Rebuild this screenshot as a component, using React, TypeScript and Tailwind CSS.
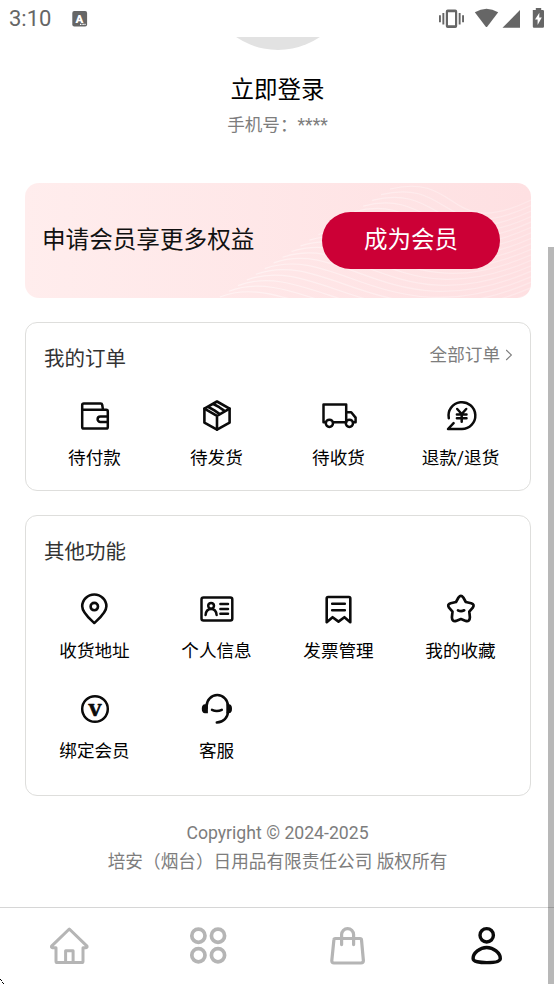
import React from "react";

const INK = "#0b0b0b";
const MUTED = "#b5b5b5";

function Glyph({ children, w = 2.5 }: { children: React.ReactNode; w?: number }) {
  return (
    <svg width="40" height="40" viewBox="0 0 40 40" fill="none" stroke={INK} strokeWidth={w} strokeLinecap="round" strokeLinejoin="round">
      {children}
    </svg>
  );
}

const Wallet = () => (
  <Glyph w={2.5}>
    <path d="M7.2 14V9Q7.2 7.4 8.8 7.4H25.6Q27 7.4 27.2 8.8L28 13.8" />
    <path d="M7.2 13.8H31.2Q32.8 13.8 32.8 15.4V31Q32.8 32.6 31.2 32.6H8.8Q7.2 32.6 7.2 31Z" />
    <path d="M32.4 20.4H25.4a2.8 2.8 0 0 0 0 5.6H32.4" />
  </Glyph>
);
const Box = () => (
  <Glyph w={2.6}>
    <path d="M20 5.5L32.6 12.6V26.6L20 33.7L7.4 26.6V12.6Z" />
    <path d="M7.4 12.6L20 19.8L32.6 12.6M20 19.8V33.5M16.4 8L22.2 11.2L26.8 14.4M11.4 11L17.4 14.4L22.4 17.8" />
  </Glyph>
);
const Truck = () => (
  <Glyph w={2.5}>
    <path d="M6.5 26.2H4.5V8.4H27.2V26.2H14.5" />
    <path d="M27.2 16.2H32.2L36.6 21.6V26.2H34.6" />
    <circle cx="10.4" cy="27.3" r="3.6" />
    <circle cx="30.4" cy="27.3" r="3.6" />
  </Glyph>
);
const Refund = () => (
  <Glyph w={2.5}>
    <path d="M7.8 22.3A13.4 13.4 0 1 1 20.7 33H7L12.6 27.2" />
    <path d="M16.2 13L20.7 18L25.2 13M15.9 18.4H25.5M15.9 22.2H25.5M20.7 18V25.8" />
  </Glyph>
);
const Pin = () => (
  <Glyph w={2.6}>
    <path d="M19.3 34C15 30 7.2 24 7.2 17.3A12.1 11.8 0 0 1 31.4 17.3C31.4 24 23.6 30 19.3 34Z" />
    <circle cx="19.3" cy="17.6" r="3.7" />
  </Glyph>
);
const IdCard = () => (
  <Glyph w={2.5}>
    <rect x="4.5" y="8.5" width="30.8" height="23" rx="2" />
    <circle cx="14.1" cy="16.8" r="2.9" />
    <path d="M8.6 26C8.9 22.2 11 20 14.1 20S19.3 22.2 19.6 26M23.4 15.1H31M23.4 20H31M23.4 24.8H31" />
  </Glyph>
);
const Invoice = () => (
  <Glyph w={2.6}>
    <path d="M7.7 33.2V9.4Q7.7 8 9.1 8H29.9Q31.3 8 31.3 9.4V33.2L25.4 28.2L19.5 32.6L13.6 28.2Z" />
    <path d="M13.2 14.8H25.8M13.2 21.2H25.8" />
  </Glyph>
);
const Star = () => (
  <Glyph w={2.7}>
    <path d="M17.5 8.5Q19.9 5.3 22.3 8.5L24.8 13L30.2 14.2Q34 15.5 31.8 18.7L28.3 22.7L28.9 28.3Q28.8 32.8 24.8 31.9L19.9 30L15 31.9Q11 32.8 10.9 28.3L11.5 22.7L8 18.7Q5.8 15.5 9.6 14.2L15 13Z" />
    <path d="M17 21.3Q20 23 23.2 21.3" />
  </Glyph>
);
const VipBadge = () => (
  <Glyph>
    <circle cx="20" cy="20" r="12.8" />
    <text x="20" y="26.6" textAnchor="middle" fontSize="16.5" fontWeight="700" fill={INK} stroke={INK} strokeWidth="0.7" fontFamily="DejaVu Serif, serif">V</text>
  </Glyph>
);
const Service = () => (
  <Glyph w={2.5}>
    <path d="M9.6 19V17A10.7 10.9 0 0 1 31 17V22C31 28.6 26.5 33.2 19.8 33.4" />
    <path d="M15 20.8Q19.8 23.2 24.8 20.8" />
    <path d="M10.9 15.2V24.2H8Q4.8 24 4.8 19.7T8 15.2ZM29.4 15.2V24.2H31.9Q35 24 35 19.7T31.9 15.2Z" fill={INK} stroke="none" />
  </Glyph>
);

const orders = [
  { label: "待付款", Icon: Wallet },
  { label: "待发货", Icon: Box },
  { label: "待收货", Icon: Truck },
  { label: "退款/退货", Icon: Refund },
];
const features = [
  { label: "收货地址", Icon: Pin },
  { label: "个人信息", Icon: IdCard },
  { label: "发票管理", Icon: Invoice },
  { label: "我的收藏", Icon: Star },
  { label: "绑定会员", Icon: VipBadge },
  { label: "客服", Icon: Service },
];

function Menu({ items }: { items: typeof orders }) {
  return (
    <div className="grid grid-cols-[repeat(4,122px)] px-2">
      {items.map(({ label, Icon }) => (
        <div key={label} className="flex h-[100px] flex-col items-center">
          <Icon />
          <span className="mt-[9px] pr-px text-[17.6px] leading-[26px] text-black">{label}</span>
        </div>
      ))}
    </div>
  );
}

function StatusBar() {
  return (
    <header className="flex h-[37px] items-center justify-between pl-[9px]">
      <div className="flex items-center">
        <span className="w-[63px] pt-px font-['Roboto'] text-[22px] leading-[36px] text-[#666]">3:10</span>
        <svg width="16" height="18" viewBox="0 0 16 18">
          <rect x="0.3" y="1" width="14.8" height="15.6" rx="2" fill="#666" />
          <text x="7.3" y="12.8" textAnchor="middle" fontSize="11.5" fontWeight="900" fontFamily="Roboto, sans-serif" fill="#fff">A</text>
          <path d="M8 14.4h1.4M10.4 14.4h1.4M12.4 14.4h1.2" stroke="#fff" strokeWidth="1.2" />
        </svg>
      </div>
      <svg width="116" height="37" viewBox="438 0 116 37" fill="#666">
        <path fillRule="evenodd" d="M447.7 9.5H455.3Q457.2 9.5 457.2 11.4V26Q457.2 27.9 455.3 27.9H447.7Q445.8 27.9 445.8 26V11.4Q445.8 9.5 447.7 9.5ZM448 12.2V25.2H455V12.2Z" />
        <path d="M439 15.2h1.9v7H439zM442.4 13h1.9v11.6h-1.9zM458.7 13h1.9v11.6h-1.9zM462.1 15.2h1.9v7h-1.9z" />
        <path d="M474.8 12.3Q486.5 5 498.2 12.3L487.4 26.5Q486.5 27.5 485.6 26.5Z" />
        <path d="M520 10V27.8H502.5Z" />
        <path d="M534.8 10H532.8V26.6Q532.8 27.8 534 27.8H542.8Q544 27.8 544 26.6V11.2Q544 10 542.8 10H541.2V8H535.8V10Z" />
        <path d="M539.4 12.8L535 19.6H537.6V25L541.8 17.6H539.2Z" fill="#fff" />
      </svg>
    </header>
  );
}

function Waves() {
  const lines = Array.from({ length: 20 }, (_, i) => {
    const t = i / 19;
    const x = 195 + t * 170;
    const y = 114 - t * 108;
    return `M${x} ${y}C${x + 75} ${y - 30 + 12 * t} ${350 + 70 * t} ${195 - 130 * t} ${520} ${115 - 105 * t}`;
  });
  return (
    <svg className="absolute inset-0" width="506" height="115" viewBox="0 0 506 115" fill="none">
      <defs>
        <linearGradient id="fan" gradientUnits="userSpaceOnUse" x1="195" y1="0" x2="506" y2="0">
          <stop offset="0" stopColor="#fff" stopOpacity="0.45" />
          <stop offset="1" stopColor="#fff" stopOpacity="0.25" />
        </linearGradient>
      </defs>
      {lines.map((d) => (
        <path key={d} d={d} stroke="url(#fan)" strokeWidth="1.2" />
      ))}
    </svg>
  );
}

function TabBar() {
  return (
    <nav className="grid h-[77px] grid-cols-[repeat(4,139px)] items-start justify-items-center overflow-hidden border-t border-[#d6d6d6] bg-white pt-[18px]">
      <svg width="41" height="40" viewBox="0 0 41 40" fill="none" stroke={MUTED} strokeWidth="3" strokeLinejoin="round">
        <path d="M20.3 3L38 20.2Q38.5 21.6 37 21.7H34V35.2Q34 36.6 32.6 36.6H8.4Q7 36.6 7 35.2V21.7H3.5Q2 21.6 2.6 20.2Z" />
        <path d="M16.6 36V24.7H24.1V36" />
      </svg>
      <svg width="41" height="40" viewBox="0 0 41 40" fill="none" stroke={MUTED} strokeWidth="3.7">
        <circle cx="10.4" cy="9.7" r="6.6" />
        <circle cx="30" cy="9.7" r="6.6" />
        <circle cx="10.4" cy="29.2" r="6.6" />
        <circle cx="30" cy="29.2" r="6.6" />
      </svg>
      <svg width="41" height="40" viewBox="0 0 41 40" fill="none" stroke={MUTED} strokeWidth="3.2" strokeLinecap="round" strokeLinejoin="round">
        <path d="M8.3 12.5H33Q34.4 12.5 34.5 13.9L36.4 34.6Q36.4 37 34 37H7Q4.7 37 4.8 34.6L6.9 13.9Q7 12.5 8.3 12.5Z" />
        <path d="M14.6 18.6V8.6A6 6 0 0 1 26.6 8.6V18.6" />
      </svg>
      <svg width="41" height="40" viewBox="0 0 41 40" fill="none" stroke={INK} strokeWidth="3.4">
        <circle cx="20.7" cy="9.3" r="6.7" />
        <path d="M20.7 21.5C27.5 21.5 34.3 27 34.3 32.4C34.3 35.8 27.5 36.6 20.7 36.6S7.1 35.8 7.1 32.4C7.1 27 13.9 21.5 20.7 21.5Z" />
      </svg>
    </nav>
  );
}

export default function App() {
  return (
    <div className="relative flex h-[984px] w-[554px] flex-col overflow-hidden bg-white font-['Roboto','Noto_Sans_CJK_SC',sans-serif]">
      <StatusBar />
      <main className="flex flex-1 flex-col">
        <div className="flex h-[13px] items-end justify-center overflow-hidden pl-[2px]">
          <div className="size-[148px] shrink-0 rounded-full bg-[#e2e2e2]" />
        </div>
        <section className="flex h-[133px] flex-col items-center pt-[23px] pl-px">
          <h1 className="text-[23.5px] leading-[34px] text-black">立即登录</h1>
          <p className="mt-[5px] text-[17.6px] leading-[26px] text-[#7d7d7d]">手机号：****</p>
        </section>

        <section className="relative ml-[25px] flex h-[115px] w-[506px] items-center justify-between overflow-hidden rounded-[14px] bg-linear-to-r from-[#ffeded] to-[#fee0e2] pr-[31px] pl-[17px]">
          <Waves />
          <span className="relative pb-px text-[23.6px] leading-[34px] text-[#111]">申请会员享更多权益</span>
          <button className="relative h-[57px] w-[178px] rounded-full bg-[#cc0036] pb-px text-[23.5px] leading-[34px] text-white">成为会员</button>
        </section>

        <section className="mt-6 ml-[25px] h-[169px] w-[506px] overflow-hidden rounded-[12px] border border-[#dededc]">
          <div className="flex h-[73px] items-start justify-between pr-[17px] pl-[18px]">
            <h2 className="pt-[21px] text-[20.5px] leading-[30px] text-[#333]">我的订单</h2>
            <a className="mt-[19px] flex items-center gap-[5px] text-[17.6px] leading-[26px] text-[#7d7d7d]">
              全部订单
              <svg width="8" height="12" viewBox="0 0 8 12" fill="none" stroke="#7d7d7d" strokeWidth="1.1">
                <path d="M1.2 1L6.4 6L1.2 11" />
              </svg>
            </a>
          </div>
          <Menu items={orders} />
        </section>

        <section className="mt-6 ml-[25px] h-[281px] w-[506px] overflow-hidden rounded-[12px] border border-[#dededc]">
          <h2 className="h-[73px] pt-[21px] pl-[18px] text-[20.5px] leading-[30px] text-[#333]">其他功能</h2>
          <Menu items={features} />
        </section>

        <footer className="mt-[23px] pl-px text-center text-[17.65px] leading-[29px] text-[#7d7d7d]">
          <p>Copyright © 2024-2025</p>
          <p>培安（烟台）日用品有限责任公司 版权所有</p>
        </footer>
      </main>
      <TabBar />
      <div className="absolute top-[247px] right-0 h-[737px] w-[6px] bg-black/28" />
      <svg className="absolute bottom-0 left-0" width="5" height="5" viewBox="0 0 5 5">
        <path d="M0 0h1v1H0zM1 1h1v1H1zM2 3h1v1H2zM3 4h1v1H3z" fill="#000" />
      </svg>
    </div>
  );
}
